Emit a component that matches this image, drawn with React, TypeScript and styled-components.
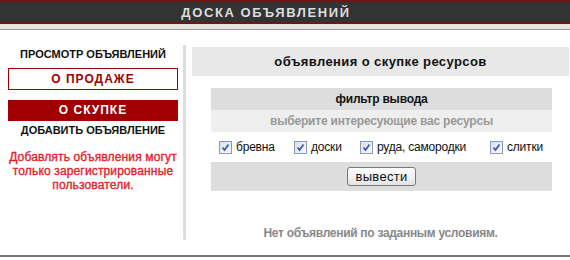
import { createGlobalStyle } from 'styled-components';
import styled from 'styled-components';

const GlobalStyle = createGlobalStyle`
  body {
    margin: 0;
    background: #fff;
    font-family: 'Liberation Sans', Arial, sans-serif;
  }
`;

const Page = styled.div`
  width: 570px;
  height: 260px;
  overflow: hidden;
`;

const TopBar = styled.header`
  height: 20px;
  background: #333;
  border-top: 2px solid #6a1818;
  border-bottom: 2px solid #6a1818;
  display: flex;
  align-items: center;
  justify-content: center;
  padding-right: 38px;
  color: #ddd;
  font-weight: bold;
  font-size: 13px;
  letter-spacing: 1.6px;
`;

const TopShade = styled.div`
  height: 5px;
  background: #e6e2dd;
  border-bottom: 1px solid #999;
`;

const Main = styled.main`
  display: flex;
  height: 225px;
  border-bottom: 2px solid #777;
`;

const Sidebar = styled.nav`
  width: 170px;
  margin-left: 8px;
  display: flex;
  flex-direction: column;
  align-items: stretch;
  text-align: center;
`;

const NavLabel = styled.div<{ $top: number }>`
  margin-top: ${(p) => p.$top}px;
  height: 16px;
  line-height: 16px;
  font-size: 11px;
  font-weight: bold;
  color: #111;
`;

const NavButton = styled.div<{ $active?: boolean; $top: number }>`
  margin-top: ${(p) => p.$top}px;
  height: ${(p) => (p.$active ? 21 : 20)}px;
  line-height: ${(p) => (p.$active ? 21 : 20)}px;
  border: ${(p) => (p.$active ? 'none' : '1px solid #a00000')};
  background: ${(p) => (p.$active ? '#a00000' : '#fff')};
  color: ${(p) => (p.$active ? '#fff' : '#a00000')};
  font-size: 12px;
  font-weight: bold;
  letter-spacing: 1px;
`;

const Notice = styled.p`
  margin: 12px 0 0;
  line-height: 14px;
  font-size: 12px;
  letter-spacing: 0.15px;
  -webkit-text-stroke: 0.35px #e5202a;
  color: #e5202a;
`;

const Divider = styled.div`
  width: 3px;
  height: 195px;
  margin: 15px 6px 0 5px;
  background: #ddd;
  border-radius: 1px;
`;

const Content = styled.section`
  width: 377px;
  margin-top: 17px;
  display: flex;
  flex-direction: column;
  align-items: center;
`;

const Title = styled.h1`
  align-self: stretch;
  margin: 0;
  height: 29px;
  line-height: 29px;
  background: #e8e8e8;
  text-align: center;
  font-size: 13px;
  font-weight: bold;
  letter-spacing: 0.4px;
  color: #111;
`;

const Filter = styled.div`
  width: 341px;
  margin-top: 12px;
  transform: translateX(1px);
  display: flex;
  flex-direction: column;
`;

const FilterRow = styled.div<{ $shade: string; $color?: string; $h: number }>`
  height: ${(p) => p.$h}px;
  background: ${(p) => p.$shade};
  color: ${(p) => p.$color ?? '#111'};
  display: flex;
  align-items: center;
  justify-content: center;
  font-size: 12px;
  font-weight: bold;
  letter-spacing: -0.2px;
`;

const Options = styled.div`
  height: 30px;
  display: grid;
  grid-template-columns: 75px 66px 130px 1fr;
  align-items: center;
  padding-left: 8px;
`;

const Option = styled.label`
  display: flex;
  align-items: center;
  gap: 4px;
  font-size: 12px;
  letter-spacing: -0.2px;
  color: #111;
`;

const Box = styled.span`
  width: 11px;
  height: 11px;
  border: 1px solid #8c9bb5;
  background: linear-gradient(135deg, #d9dfea, #fafbfd);
  display: flex;
  align-items: center;
  justify-content: center;
`;

const SubmitButton = styled.button`
  width: 69px;
  height: 19px;
  padding: 0;
  border: 1px solid #777;
  border-radius: 3px;
  background: linear-gradient(#fff, #e4e4e4);
  font-family: 'Liberation Sans', Arial, sans-serif;
  font-size: 13px;
  color: #111;
  letter-spacing: 0.3px;
`;

const Empty = styled.p`
  margin: 35px 0 0;
  line-height: 14px;
  font-size: 12px;
  font-weight: bold;
  letter-spacing: -0.3px;
  color: #888;
`;

const Check = () => (
  <Box>
    <svg width="9" height="9" viewBox="0 0 9 9">
      <path d="M1.5 4.5 L3.5 7 L7.5 1.5" fill="none" stroke="#3d5db5" strokeWidth="1.8" />
    </svg>
  </Box>
);

const resources = ['бревна', 'доски', 'руда, самородки', 'слитки'];

function App() {
  return (
    <Page>
      <GlobalStyle />
      <TopBar>ДОСКА ОБЪЯВЛЕНИЙ</TopBar>
      <TopShade />
      <Main>
        <Sidebar>
          <NavLabel $top={16}>ПРОСМОТР ОБЪЯВЛЕНИЙ</NavLabel>
          <NavButton $top={6}>О ПРОДАЖЕ</NavButton>
          <NavButton $top={10} $active>
            О СКУПКЕ
          </NavButton>
          <NavLabel $top={1}>ДОБАВИТЬ ОБЪЯВЛЕНИЕ</NavLabel>
          <Notice>
            Добавлять объявления могут только зарегистрированные пользователи.
          </Notice>
        </Sidebar>
        <Divider />
        <Content>
          <Title>объявления о скупке ресурсов</Title>
          <Filter>
            <FilterRow $shade="#ddd" $h={22}>
              фильтр вывода
            </FilterRow>
            <FilterRow $shade="#eee" $color="#999" $h={22}>
              выберите интересующие вас ресурсы
            </FilterRow>
            <Options>
              {resources.map((r) => (
                <Option key={r}>
                  <Check />
                  {r}
                </Option>
              ))}
            </Options>
            <FilterRow $shade="#ddd" $h={29}>
              <SubmitButton>вывести</SubmitButton>
            </FilterRow>
          </Filter>
          <Empty>Нет объявлений по заданным условиям.</Empty>
        </Content>
      </Main>
    </Page>
  );
}

export default App;
